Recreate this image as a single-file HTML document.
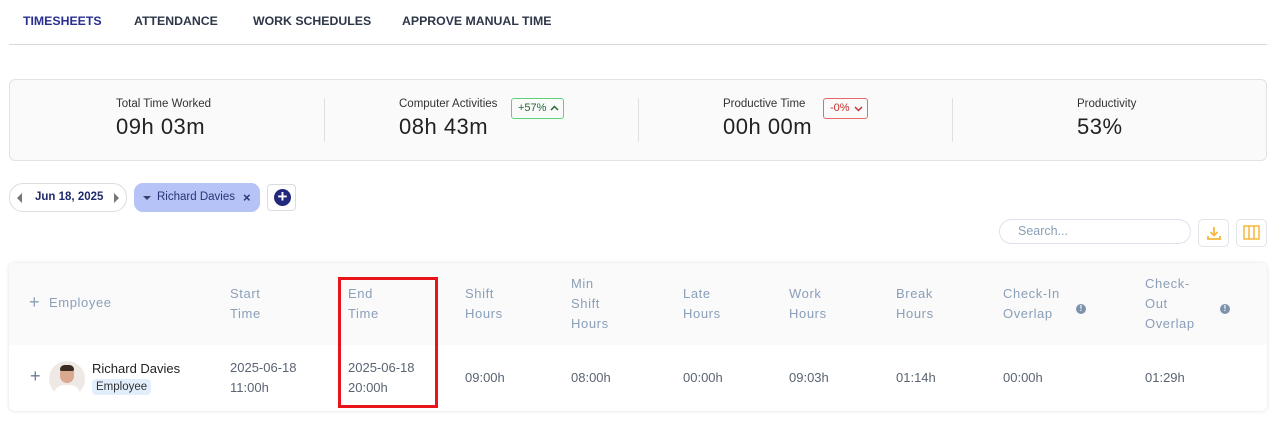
<!DOCTYPE html>
<html><head><meta charset="utf-8"><style>
*{margin:0;padding:0;box-sizing:border-box}
body{width:1278px;height:437px;background:#fff;font-family:"Liberation Sans",sans-serif;position:relative;overflow:hidden;color:#333}
.a{position:absolute}
.tab{position:absolute;top:14px;font-size:12.3px;font-weight:bold;color:#2d3748}
.lbl{font-size:11.5px;color:#333}
.big{font-size:22px;color:#222;letter-spacing:0.5px}
.h{position:absolute;font-size:13px;color:#8a9fb8;line-height:20px;letter-spacing:0.6px}
.c{position:absolute;font-size:13px;color:#5a6472;line-height:20px}
.info{display:inline-block;width:10px;height:10px;border-radius:50%;background:#7d93ad;color:#fff;font-size:8px;text-align:center;line-height:10px;font-weight:bold}
</style></head><body>
<div class="tab" style="left:23px;color:#2a2f8f">TIMESHEETS</div>
<div class="tab" style="left:134px">ATTENDANCE</div>
<div class="tab" style="left:253px">WORK SCHEDULES</div>
<div class="tab" style="left:402px">APPROVE MANUAL TIME</div>
<div class="a" style="left:9px;top:44px;width:1258px;height:1px;background:#d8d8d8"></div>

<div class="a" style="left:9px;top:79px;width:1258px;height:82px;border:1px solid #e3e3e3;border-radius:6px;background:#fafafa"></div>
<div class="a" style="left:324px;top:98px;width:1px;height:44px;background:#e0e0e0"></div>
<div class="a" style="left:638px;top:98px;width:1px;height:44px;background:#e0e0e0"></div>
<div class="a" style="left:952px;top:98px;width:1px;height:44px;background:#e0e0e0"></div>
<div class="a lbl" style="left:116px;top:98px">Total Time Worked</div>
<div class="a big" style="left:116px;top:114px">09h 03m</div>
<div class="a lbl" style="left:399px;top:98px">Computer Activities</div>
<div class="a big" style="left:399px;top:114px">08h 43m</div>
<div class="a" style="left:511px;top:98px;width:53px;height:21px;border:1px solid #5cd27a;border-radius:3px;font-size:11px;color:#1f6b33;line-height:19px;padding-left:6px">+57%<svg style="position:absolute;left:38px;top:6px" width="9" height="6" viewBox="0 0 9 6" fill="none" stroke="#1f6b33" stroke-width="1.5"><path d="M1 5l3.5-3.5L8 5"/></svg></div>
<div class="a lbl" style="left:723px;top:98px">Productive Time</div>
<div class="a big" style="left:723px;top:114px">00h 00m</div>
<div class="a" style="left:823px;top:98px;width:45px;height:21px;border:1px solid #e46a6a;border-radius:3px;font-size:11px;color:#c53030;line-height:19px;padding-left:6px">-0%<svg style="position:absolute;left:30px;top:7px" width="9" height="6" viewBox="0 0 9 6" fill="none" stroke="#c53030" stroke-width="1.5"><path d="M1 1l3.5 3.5L8 1"/></svg></div>
<div class="a lbl" style="left:1077px;top:98px">Productivity</div>
<div class="a big" style="left:1077px;top:114px">53%</div>

<div class="a" style="left:9px;top:183px;width:118px;height:29px;border:1px solid #ddd;border-radius:14px"></div>
<div class="a" style="left:17px;top:193px;width:0;height:0;border-top:5px solid transparent;border-bottom:5px solid transparent;border-right:5px solid #777"></div>
<div class="a" style="left:35px;top:191px;font-size:11.5px;font-weight:bold;color:#1e2a6b">Jun 18, 2025</div>
<div class="a" style="left:114px;top:193px;width:0;height:0;border-top:5px solid transparent;border-bottom:5px solid transparent;border-left:5px solid #777"></div>
<div class="a" style="left:134px;top:183px;width:126px;height:29px;border-radius:9px;background:#b5c3f7"></div>
<div class="a" style="left:143px;top:196px;width:0;height:0;border-left:4px solid transparent;border-right:4px solid transparent;border-top:4px solid #3a3f6a"></div>
<div class="a" style="left:157px;top:191px;font-size:11.5px;color:#2a3475">Richard Davies</div>
<div class="a" style="left:243px;top:190px;font-size:13px;color:#2a3475;font-weight:bold">×</div>
<div class="a" style="left:267px;top:184px;width:29px;height:27px;border:1px solid #ddd;border-radius:4px"></div>
<div class="a" style="left:274px;top:189px;width:17px;height:17px;border-radius:50%;background:#23297a;color:#fff;font-size:17px;line-height:16px;text-align:center;font-weight:bold">+</div>

<div class="a" style="left:999px;top:219px;width:192px;height:25px;border:1px solid #dde3ea;border-radius:13px"></div>
<div class="a" style="left:1018px;top:224px;font-size:12.5px;color:#8a9fb8">Search...</div>
<div class="a" style="left:1198px;top:219px;width:31px;height:28px;border:1px solid #e0e4ea;border-radius:5px"></div>
<svg class="a" style="left:1206px;top:225px" width="16" height="16" viewBox="0 0 16 16" fill="none" stroke="#f6b73c" stroke-width="1.8"><path d="M8 2v8M4.5 7l3.5 3.5L11.5 7M2 11v3h12v-3"/></svg>
<div class="a" style="left:1236px;top:219px;width:31px;height:28px;border:1px solid #e0e4ea;border-radius:5px"></div>
<svg class="a" style="left:1243px;top:225px" width="17" height="15" viewBox="0 0 17 15" fill="none" stroke="#f6b73c" stroke-width="1.5"><rect x="1" y="1" width="15" height="13"/><path d="M6 1v13M11 1v13"/></svg>

<div class="a" style="left:9px;top:263px;width:1258px;height:148px;border-radius:6px;background:#fff;box-shadow:0 0 4px rgba(0,0,0,0.12);overflow:hidden">
<div style="height:82px;background:#fafafa"></div></div>
<div class="h" style="left:29px;top:292px;font-size:18px;color:#8a9fb8">+</div>
<div class="h" style="left:49px;top:293px">Employee</div>
<div class="h" style="left:230px;top:284px">Start<br>Time</div>
<div class="h" style="left:348px;top:284px">End<br>Time</div>
<div class="h" style="left:465px;top:284px">Shift<br>Hours</div>
<div class="h" style="left:571px;top:274px">Min<br>Shift<br>Hours</div>
<div class="h" style="left:683px;top:284px">Late<br>Hours</div>
<div class="h" style="left:789px;top:284px">Work<br>Hours</div>
<div class="h" style="left:896px;top:284px">Break<br>Hours</div>
<div class="h" style="left:1003px;top:284px">Check-In<br>Overlap</div>
<div class="a" style="left:1076px;top:298px"><span class="info">!</span></div>
<div class="h" style="left:1145px;top:274px">Check-<br>Out<br>Overlap</div>
<div class="a" style="left:1220px;top:298px"><span class="info">!</span></div>

<div class="a" style="left:30px;top:366px;font-size:18px;color:#6b7a90">+</div>
<div class="a" style="left:49px;top:361px;width:36px;height:36px;border-radius:50%;background:#efe9e6;overflow:hidden">
<div class="a" style="left:11px;top:5px;width:14px;height:17px;border-radius:7px;background:#d9a88e"></div>
<div class="a" style="left:11px;top:4px;width:14px;height:6px;border-radius:6px 6px 2px 2px;background:#3a2a22"></div>
<div class="a" style="left:5px;top:24px;width:26px;height:14px;border-radius:10px 10px 0 0;background:#fff"></div></div>
<div class="a" style="left:92px;top:361px;font-size:13px;color:#222">Richard Davies</div>
<div class="a" style="left:92px;top:379px;padding:0 4px;height:16px;background:#e3eefc;border-radius:4px;font-size:11.5px;color:#333;line-height:16px">Employee</div>
<div class="c" style="left:230px;top:358px">2025-06-18<br>11:00h</div>
<div class="c" style="left:348px;top:358px">2025-06-18<br>20:00h</div>
<div class="c" style="left:465px;top:368px">09:00h</div>
<div class="c" style="left:571px;top:368px">08:00h</div>
<div class="c" style="left:683px;top:368px">00:00h</div>
<div class="c" style="left:789px;top:368px">09:03h</div>
<div class="c" style="left:896px;top:368px">01:14h</div>
<div class="c" style="left:1003px;top:368px">00:00h</div>
<div class="c" style="left:1145px;top:368px">01:29h</div>

<div class="a" style="left:338px;top:277px;width:100px;height:131px;border:3px solid #e8141a"></div>
</body></html>
